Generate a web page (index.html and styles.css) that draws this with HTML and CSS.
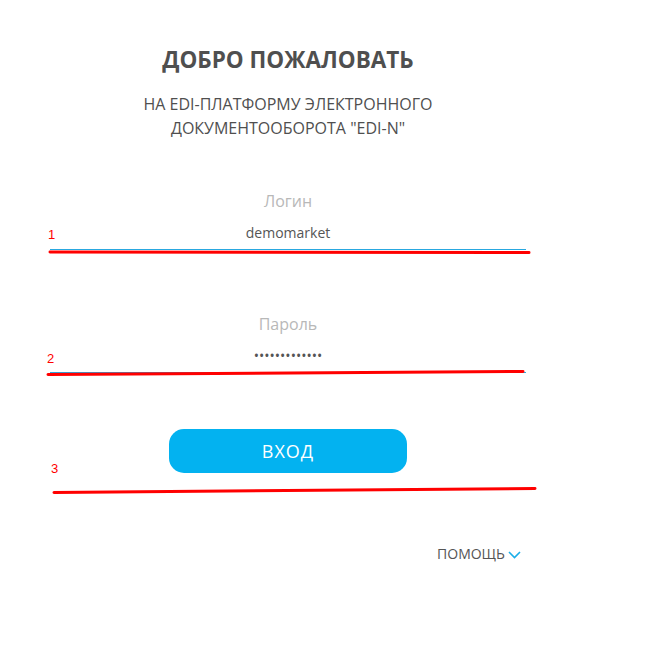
FILE: index.html
```html
<!DOCTYPE html>
<html lang="ru">
<head>
<meta charset="utf-8">
<title>EDI-N</title>
<link rel="stylesheet" href="styles.css">
</head>
<body>
<main class="page">
  <h1 class="title">ДОБРО ПОЖАЛОВАТЬ</h1>
  <p class="subtitle">НА EDI-ПЛАТФОРМУ ЭЛЕКТРОННОГО<br>ДОКУМЕНТООБОРОТА "EDI-N"</p>
  <form class="form">
    <label class="field">
      <span class="label">Логин</span>
      <input class="input" type="text" value="demomarket">
    </label>
    <label class="field field-pass">
      <span class="label">Пароль</span>
      <input class="input" type="password" value="demomarket123">
    </label>
    <button class="btn" type="button">ВХОД</button>
  </form>
  <div class="help-row">
    <a class="help">ПОМОЩЬ<svg class="chev" width="13" height="8" viewBox="0 0 13 8"><path d="M1 1 L6.5 6.5 L12 1" fill="none" stroke="#1aaee8" stroke-width="1.6"/></svg></a>
  </div>
</main>
<svg class="marks" width="660" height="647" viewBox="0 0 660 647">
  <g fill="#ff0000" font-family="Liberation Sans, sans-serif" font-size="13">
    <text x="48" y="239">1</text>
    <text x="47" y="363">2</text>
    <text x="51" y="473">3</text>
  </g>
  <g stroke="#ff0000" stroke-width="3" stroke-linecap="round" fill="none">
    <path d="M50 252 L529 252.5"/>
    <path d="M48 374.5 L523 371.5"/>
    <path d="M54 492.5 L535 488.5"/>
  </g>
</svg>
</body>
</html>
```
FILE: styles.css
```css
html, body {
  margin: 0;
  padding: 0;
  background: #ffffff;
}
body {
  font-family: "Open Sans", "Noto Sans", sans-serif;
  color: #555555;
  position: relative;
  width: 660px;
  height: 647px;
  overflow: hidden;
}
.page {
  width: 476px;
  margin-left: 50px;
  text-align: center;
  padding-top: 45px;
}
.title {
  margin: 0;
  font-size: 22.5px;
  line-height: 30px;
  font-weight: 700;
  color: #4f4f4f;
}
.subtitle {
  margin: 17px 0 0;
  font-size: 16px;
  line-height: 24px;
  font-weight: 400;
  color: #4f4f4f;
}
.form {
  display: flex;
  flex-direction: column;
  margin-top: 51px;
}
.field {
  display: flex;
  flex-direction: column;
}
.field-pass {
  margin-top: 64px;
}
.label {
  font-size: 16px;
  line-height: 20px;
  color: #b8b8b8;
}
.input {
  font-family: "Open Sans", "Noto Sans", sans-serif;
  font-size: 14px;
  line-height: 19px;
  color: #555555;
  text-align: center;
  border: 0;
  border-bottom: 1px solid #29a8e0;
  padding: 12px 0 7px;
  margin: 0;
  outline: none;
  background: transparent;
  width: 100%;
  box-sizing: content-box;
}
.btn {
  align-self: center;
  margin-top: 56px;
  width: 238px;
  height: 44px;
  border: 0;
  border-radius: 15px;
  background: #03b2f0;
  color: #ffffff;
  font-family: "Open Sans", "Noto Sans", sans-serif;
  font-size: 18px;
  letter-spacing: 1px;
  padding: 0;
}
.help-row {
  display: flex;
  justify-content: flex-end;
  margin-top: 72px;
  padding-right: 5px;
}
.help {
  display: flex;
  align-items: center;
  gap: 3px;
  font-size: 14px;
  line-height: 18px;
  color: #555555;
}
.chev {
  display: block;
  margin-top: 1px;
}
.marks {
  position: absolute;
  left: 0;
  top: 0;
  pointer-events: none;
}
```
